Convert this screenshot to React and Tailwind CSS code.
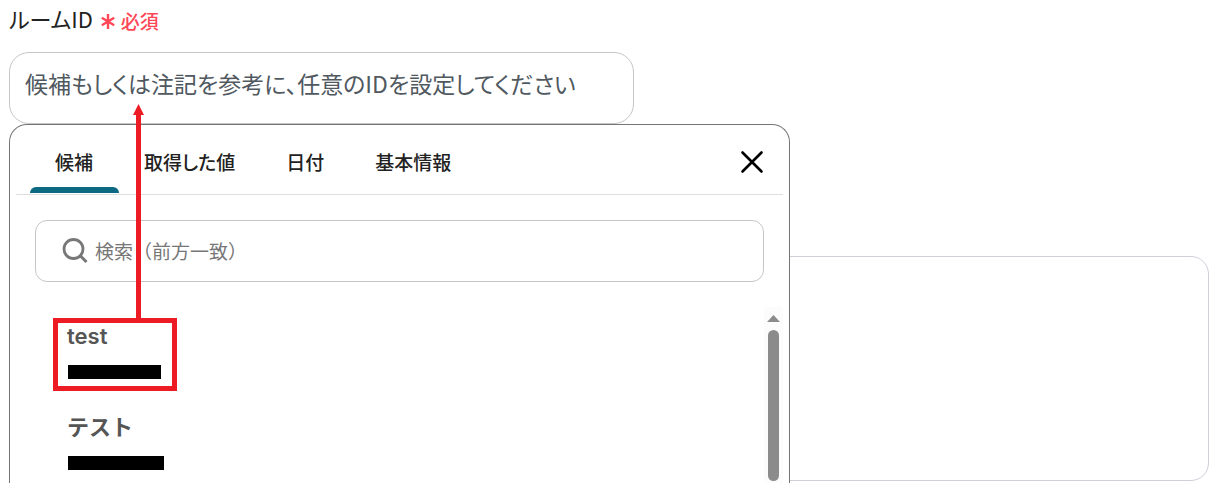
import React, { useState } from "react";

const tabs = ["候補", "取得した値", "日付", "基本情報"];

const candidates = [
  { name: "test", maskClass: "w-[93px]" },
  { name: "テスト", maskClass: "w-24" },
];

const SearchIcon = () => (
  <svg className="h-7 w-7 shrink-0 text-[#777777]" viewBox="0 0 28 28" fill="none" stroke="currentColor" aria-hidden="true">
    <circle cx="12.5" cy="12" r="9.5" strokeWidth="2.8" />
    <path d="M19 18.5L25.5 25" strokeWidth="3" />
  </svg>
);

const CloseIcon = () => (
  <svg className="h-6 w-6" viewBox="0 0 24 24" fill="none" stroke="currentColor" strokeWidth="2.6" strokeLinecap="round" aria-hidden="true">
    <path d="M2.5 2.5L21.5 21.5M21.5 2.5L2.5 21.5" />
  </svg>
);

const ScrollTrack = () => (
  <div className="flex w-[19px] shrink-0 flex-col items-center bg-[#fcfcfc] pt-2">
    <svg className="h-[7px] w-[13px] text-[#8b8b8b]" viewBox="0 0 13 7" fill="currentColor" aria-hidden="true">
      <path d="M6.5 0L13 7H0z" />
    </svg>
    <div className="mt-2 h-[151px] w-[11px] rounded-full bg-[#8b8b8b]" />
  </div>
);

const CandidateItem = ({ item }) => (
  <li>
    <button type="button" className="block text-left">
      <span className="block font-['Inter','Noto_Sans_CJK_JP',sans-serif] text-[22px] leading-[30px] font-semibold text-[#555555] [font-feature-settings:normal]">
        {item.name}
      </span>
      <span className={`mt-[14px] ml-px block h-[14px] bg-black ${item.maskClass}`} />
    </button>
  </li>
);

const CandidatePanel = () => {
  const [activeTab, setActiveTab] = useState("候補");
  const [keyword, setKeyword] = useState("");

  return (
    <div className="absolute top-full left-0 z-10 w-[781px] rounded-t-[18px] border border-b-0 border-[#757575] bg-white px-[6px]">
      <div className="flex h-[70px] items-center justify-between border-b border-[#dedede] pr-[19px] pl-[14px]">
        <div role="tablist" className="flex h-full">
          {tabs.map((tab) => (
            <button
              key={tab}
              type="button"
              role="tab"
              aria-selected={activeTab === tab}
              onClick={() => setActiveTab(tab)}
              className="relative h-full pt-[6px] pr-[26px] pl-[25px] text-[19px] font-medium text-[#222222]"
            >
              {tab}
              {activeTab === tab && (
                <span className="absolute inset-x-0 bottom-px h-[6px] rounded-t-[6px] bg-[#0b6a82]" />
              )}
            </button>
          ))}
        </div>
        <button type="button" aria-label="閉じる" className="mb-[-4px] h-7 text-black">
          <CloseIcon />
        </button>
      </div>

      <label className="mx-[19px] mt-[25px] flex h-[62px] items-center gap-[6px] rounded-xl border border-[#c6c6c6] pl-[25px]">
        <SearchIcon />
        <input
          type="text"
          aria-label="検索"
          value={keyword}
          onChange={(e) => setKeyword(e.target.value)}
          placeholder="検索（前方一致）"
          className="min-w-0 flex-1 text-[19px] font-normal outline-none [font-feature-settings:normal] placeholder:text-[#777777]"
        />
      </label>

      <div className="mt-[25px] flex justify-between">
        <ul className="space-y-[33px] pt-[14px] pb-4 pl-[51px]">
          {candidates.map((item) => (
            <CandidateItem key={item.name} item={item} />
          ))}
        </ul>
        <ScrollTrack />
      </div>
    </div>
  );
};

// 候補から入力欄への矢印
const Annotation = () => (
  <svg className="pointer-events-none absolute top-[104px] left-[53px] z-20 h-[287px] w-[124px] text-[#ed1c24]" viewBox="0 0 124 287" aria-hidden="true">
    <path d="M83 11H80L85.5 0L91 11H88V216H83z" fill="currentColor" />
    <rect x="2.5" y="216.5" width="119" height="68" fill="none" stroke="currentColor" strokeWidth="5" />
  </svg>
);

const App = () => {
  const [roomId, setRoomId] = useState("");

  return (
    <main
      lang="ja"
      className="relative h-screen overflow-hidden bg-white pr-2 pl-[9px] font-['Noto_Sans_CJK_JP',sans-serif] [font-feature-settings:'palt']"
    >
      <div className="flex h-[52px] items-start gap-2 pt-[2px]">
        <label htmlFor="roomId" className="text-[22px] leading-8 text-[#222222]">ルームID</label>
        <span className="flex items-center gap-[6px] pt-[5px] text-[19px] leading-7 font-medium text-[#ff4757]">
          <svg className="h-[15px] w-[14px]" viewBox="0 0 14 15" fill="none" stroke="currentColor" strokeWidth="2.4" aria-hidden="true">
            <path d="M7 0V15M0.8 3.8L13.2 11.2M13.2 3.8L0.8 11.2" />
          </svg>
          必須
        </span>
      </div>

      <div className="relative w-full max-w-[625px]">
        <input
          id="roomId"
          type="text"
          value={roomId}
          onChange={(e) => setRoomId(e.target.value)}
          placeholder="候補もしくは注記を参考に、任意のIDを設定してください"
          className="block h-[72px] w-full rounded-[20px] border border-[#c6c6c6] px-[15px] pb-[10px] text-[23px] outline-none placeholder:text-[#505860]"
        />
        <CandidatePanel />
      </div>

      <textarea
        aria-label="メモ"
        className="mt-[132px] block h-[225px] w-full resize-none rounded-[18px] border border-[#cfcfda] p-4 text-[22px] outline-none"
      />

      <Annotation />
    </main>
  );
};

export default App;
